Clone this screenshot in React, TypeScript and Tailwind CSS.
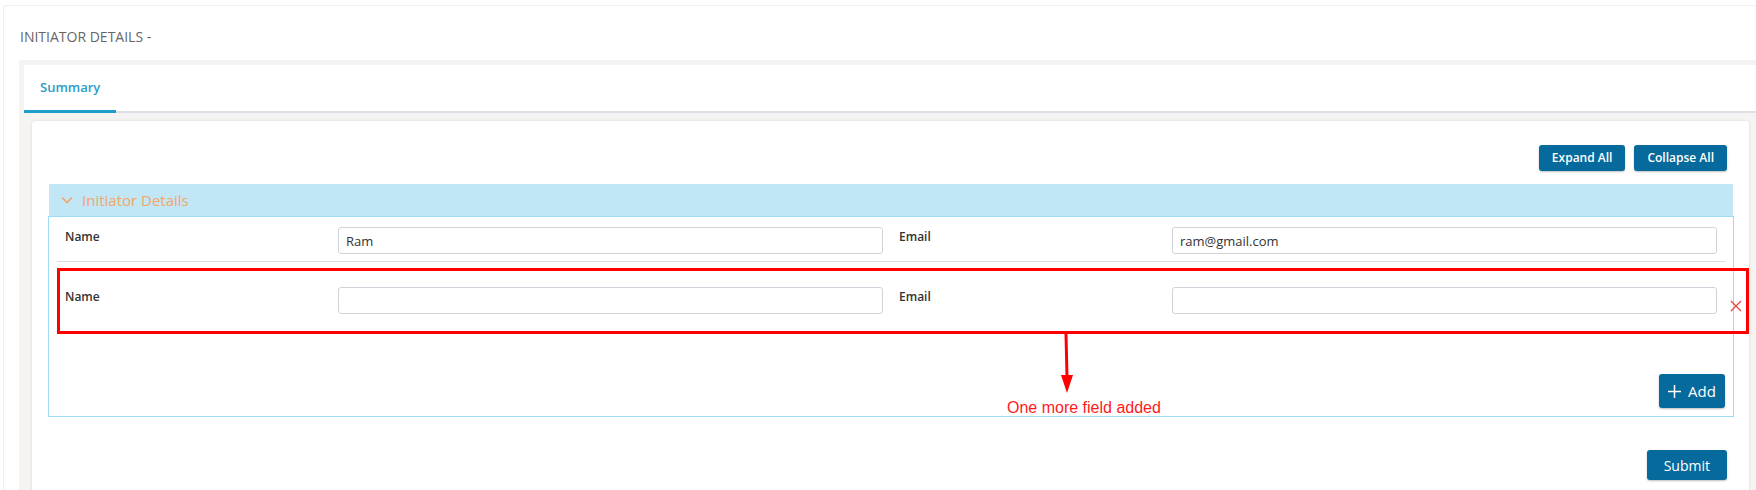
import { ReactNode } from "react";

function Field({ label, value }: { label: string; value?: string }) {
  return (
    <div className="flex-1 flex items-start px-2">
      <div className="w-[273px] text-[12px] leading-[18px] font-semibold text-[#333] mt-px">{label}</div>
      <input
        readOnly
        value={value ?? ""}
        className="flex-1 min-w-0 h-[27px] border border-[#cfd4da] rounded-[3px] px-[7px] text-[13px] text-[#333] outline-none bg-white"
      />
    </div>
  );
}

function BlueButton({ children, className = "" }: { children: ReactNode; className?: string }) {
  return (
    <button
      className={
        "bg-[#066a9c] text-white rounded-[3px] shadow-[0_1px_2px_rgba(0,0,0,0.25)] flex items-center justify-center " +
        className
      }
    >
      {children}
    </button>
  );
}

export default function App() {
  return (
    <div className="relative w-full min-h-[490px] bg-white overflow-hidden font-['Open_Sans',sans-serif]">
      <div className="ml-[3px] mt-[5px] border-l border-t border-[#f0f0f0] rounded-tl-[3px] pl-[15px] pt-[21px]">
        {/* page heading */}
        <h2 className="pl-px text-[14px] leading-[19px] text-[#666]">INITIATOR DETAILS -</h2>

        <div className="mt-[14px] bg-[#f5f4f2] pt-[5px] pl-[5px] pb-[40px]">
          {/* tabs */}
          <div className="bg-white h-[48px] border-b-2 border-[#dde1e5] flex">
            <div className="h-[48px] px-4 flex items-center border-b-[3px] border-[#1e9fc9] -mb-[2px] text-[13px] font-semibold text-[#2b9ccb]">
              Summary
            </div>
          </div>

          {/* tab content */}
          <div className="pt-[8px] pl-[8px] pr-[7px]">
            <div className="bg-white rounded-[3px] shadow-[0_0_3px_rgba(0,0,0,0.12)] pl-[16px] pr-[15px] pt-[24px] pb-[30px]">
              <div className="flex justify-end gap-[9px] pr-[7px]">
                <BlueButton className="h-[26px] px-[13px] text-[12px] font-semibold">Expand All</BlueButton>
                <BlueButton className="h-[26px] px-[13px] text-[12px] font-semibold">Collapse All</BlueButton>
              </div>

              {/* accordion */}
              <div className="mt-[13px]">
                <div className="h-[32px] mx-px bg-[#c1e6f6] flex items-center pl-[12px]">
                  <svg width="12" height="8" viewBox="0 0 12 8" fill="none">
                    <path d="M1 1.5l5 5 5-5" stroke="#f2a765" strokeWidth="1.6" />
                  </svg>
                  <span className="ml-[9px] text-[15px] leading-[20px] text-[#f2a765]">Initiator Details</span>
                </div>
                <div className="border border-[#9cdcf6] px-[8px] pt-[10px] pb-[8px]">
                  <div className="flex pb-[7px] border-b border-[#dcdcdc]">
                    <Field label="Name" value="Ram" />
                    <Field label="Email" value="ram@gmail.com" />
                  </div>
                  <div className="relative flex pt-[25px]">
                    <Field label="Name" />
                    <Field label="Email" />
                    <svg
                      className="absolute top-[38px] right-[-17px]"
                      width="12"
                      height="12"
                      viewBox="0 0 12 12"
                      fill="none"
                    >
                      <path d="M1 1l10 10M11 1L1 11" stroke="#e5473c" strokeWidth="1.3" />
                    </svg>
                  </div>
                  <div className="flex justify-end mt-[60px]">
                    <BlueButton className="h-[34px] w-[66px] gap-[7px] text-[15px]">
                      <svg width="13" height="13" viewBox="0 0 13 13" fill="none">
                        <path d="M6.5 0v13M0 6.5h13" stroke="white" strokeWidth="1.5" />
                      </svg>
                      Add
                    </BlueButton>
                  </div>
                </div>
              </div>

              <div className="flex justify-end mt-[33px] pr-[7px]">
                <BlueButton className="h-[30px] px-[17px] text-[14px]">Submit</BlueButton>
              </div>
            </div>
          </div>
        </div>
      </div>

      {/* annotation drawn over the screenshot */}
      <div className="absolute left-[57px] top-[268px] w-[1692px] h-[66px] border-[3px] border-[#ff0000]" />
      <svg className="absolute left-[1058px] top-[334px]" width="18" height="60" viewBox="0 0 18 60" fill="none">
        <path d="M8 0L9 43" stroke="#ff0000" strokeWidth="3" />
        <path d="M3 41h12l-6 18z" fill="#ff0000" />
      </svg>
      <div className="absolute left-[1007px] top-[399px] text-[16px] leading-[18px] text-[#ff1a1a] font-['Liberation_Sans',Arial,sans-serif]">
        One more field added
      </div>
    </div>
  );
}
